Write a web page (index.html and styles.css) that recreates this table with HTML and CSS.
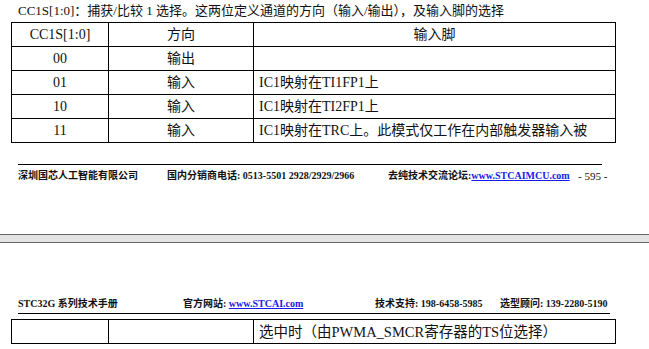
FILE: index.html
```html
<!DOCTYPE html>
<html lang="zh">
<head>
<meta charset="utf-8">
<link rel="stylesheet" href="styles.css">
</head>
<body>
<div class="page">
  <p class="title">CC1S[1:0]：捕获/比较 1 选择。这两位定义通道的方向（输入/输出），及输入脚的选择</p>
  <table class="reg">
    <tr><td class="c1">CC1S[1:0]</td><td class="c2">方向</td><td class="c3 ctr">输入脚</td></tr>
    <tr><td class="c1">00</td><td class="c2">输出</td><td class="c3"></td></tr>
    <tr><td class="c1">01</td><td class="c2">输入</td><td class="c3">IC1映射在TI1FP1上</td></tr>
    <tr><td class="c1">10</td><td class="c2">输入</td><td class="c3">IC1映射在TI2FP1上</td></tr>
    <tr><td class="c1">11</td><td class="c2">输入</td><td class="c3">IC1映射在TRC上。此模式仅工作在内部触发器输入被</td></tr>
  </table>
  <div class="footer">
    <span>深圳国芯人工智能有限公司</span>
    <span>国内分销商电话: <b>0513-5501 2928/2929/2966</b></span>
    <span>去纯技术交流论坛:<a class="lnk">www.STCAIMCU.com</a></span>
    <span class="pg">- 595 -</span>
  </div>
</div>
<div class="gap"></div>
<div class="page">
  <div class="header">
    <span><b>STC32G</b> 系列技术手册</span>
    <span>官方网站: <a class="lnk">www.STCAI.com</a></span>
    <span>技术支持: <b>198-6458-5985</b></span>
    <span>选型顾问: <b>139-2280-5190</b></span>
  </div>
  <table class="reg cont">
    <tr><td class="c1"></td><td class="c2"></td><td class="c3">选中时（由PWMA_SMCR寄存器的TS位选择）</td></tr>
  </table>
</div>
</body>
</html>
```
FILE: styles.css
```css
html, body {
  margin: 0;
  padding: 0;
  background: #fff;
}
body {
  font-family: "Liberation Serif", "Noto Sans CJK SC", serif;
  color: #111;
}
.page {
  padding-left: 11px;
}
.title {
  margin: 0;
  padding: 3px 0 0 7px;
  height: 19px;
  font-size: 13px;
  line-height: 16px;
  box-sizing: border-box;
}
.reg {
  border-collapse: collapse;
  font-size: 14px;
  table-layout: fixed;
  width: 605px;
}
.reg td {
  border: 1px solid #000;
  height: 23px;
  padding: 0;
  line-height: 16px;
  box-sizing: border-box;
}
.reg tr { height: 24px; }
.c1 { width: 97px; text-align: center; }
.c2 { width: 145px; text-align: center; }
.c3 { padding-left: 5px !important; }
.c3.ctr { text-align: center; padding-left: 0 !important; }
.reg { margin-top: 3px; }
.footer {
  margin: 21px 0 0 7px;
  width: 584px;
  border-top: 1px solid #000;
  padding-top: 5px;
  display: grid;
  grid-template-columns: 149px 221px 190px auto;
  font-size: 10px;
  line-height: 12px;
  font-weight: bold;
  font-family: "Liberation Serif", "Noto Sans CJK SC", sans-serif;
  white-space: nowrap;
}
.footer .pg { font-weight: normal; font-size: 11px; }
.lnk {
  color: #1a1aee;
  text-decoration: underline;
  font-weight: bold;
}
.gap {
  margin-top: 52px;
  height: 7px;
  background: #e4e4e4;
  border-top: 1px solid #666;
  border-bottom: 1px solid #666;
}
.header {
  margin: 55px 0 0 7px;
  width: 592px;
  border-bottom: 1px solid #000;
  padding-bottom: 3px;
  display: grid;
  grid-template-columns: 165px 192px 125px auto;
  font-size: 10px;
  line-height: 12px;
  font-weight: bold;
  font-family: "Liberation Serif", "Noto Sans CJK SC", sans-serif;
  white-space: nowrap;
}
.cont { margin-top: 5px; font-size: 14.5px; }
```
